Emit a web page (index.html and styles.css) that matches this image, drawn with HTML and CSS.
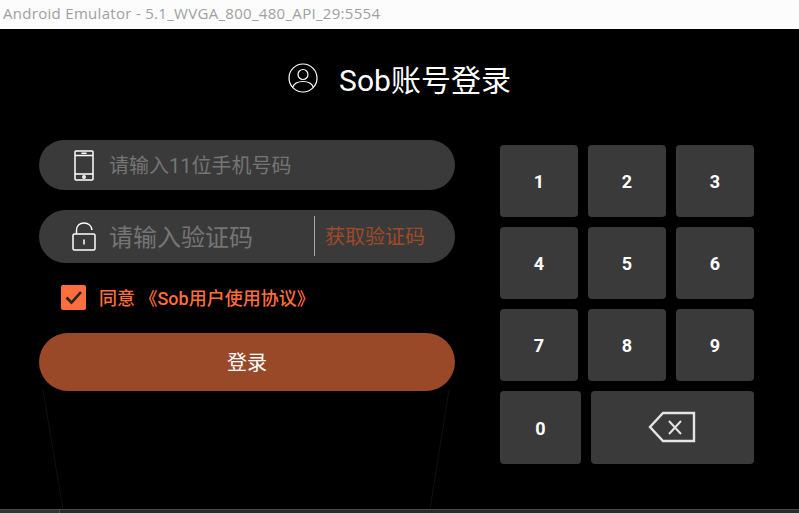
FILE: index.html
```html
<!DOCTYPE html>
<html lang="zh-CN">
  <head>
    <meta charset="UTF-8" />
    <title>Android Emulator - 5.1_WVGA_800_480_API_29:5554</title>
    <link rel="stylesheet" href="styles.css">
  </head>
  <body>
    <div class="titlebar">Android Emulator - 5.1_WVGA_800_480_API_29:5554</div>

    <div class="screen">
      <svg class="edge-lines" width="799" height="480" viewBox="0 0 799 480">
        <path d="M43 361L63 480M449 361L430 480" />
      </svg>

      <div class="heading">
        <svg class="user-icon" width="30" height="30" viewBox="0 0 30 30">
          <circle cx="15" cy="15" r="14" />
          <circle cx="15" cy="11.5" r="5" />
          <path d="M4.5 24.5C6 20.5 10 18.5 15 18.5S24 20.5 25.5 24.5" />
        </svg>
        <h1>Sob账号登录</h1>
      </div>

      <div class="content">
        <div class="form">
          <div class="field field-phone">
            <span class="field-icon">
              <svg width="20" height="31" viewBox="0 0 20 31">
                <rect x="1" y="1" width="18" height="29" rx="1" />
                <path d="M1 5.5H19M1 24H19M7.5 3.2H12.5" />
                <circle cx="10" cy="27" r="1.2" />
              </svg>
            </span>
            <span class="placeholder">请输入11位手机号码</span>
          </div>

          <div class="field field-code">
            <span class="field-icon">
              <svg width="24" height="29" viewBox="0 0 24 29">
                <rect x="1" y="12" width="22" height="16" rx="1.5" />
                <path d="M4.5 12V8.5C4.5 4 7.500 1 12 1S19.500 4 20 8" />
                <path d="M12 17.500V22.500" />
              </svg>
            </span>
            <span class="placeholder placeholder-large">请输入验证码</span>
            <span class="divider"></span>
            <span class="get-code">获取验证码</span>
          </div>

          <div class="agree">
            <span class="checkbox">
              <svg width="25" height="25" viewBox="0 0 25 25">
                <path d="M5.500 12.500L10.500 17.500L20 7" />
              </svg>
            </span>
            <span class="agree-text">同意 《Sob用户使用协议》</span>
          </div>

          <button class="login-btn">登录</button>
        </div>

        <div class="keypad">
          <div class="key">1</div>
          <div class="key">2</div>
          <div class="key">3</div>
          <div class="key">4</div>
          <div class="key">5</div>
          <div class="key">6</div>
          <div class="key">7</div>
          <div class="key">8</div>
          <div class="key">9</div>
          <div class="key-row">
            <div class="key key-zero">0</div>
            <div class="key key-back">
              <svg width="48" height="32" viewBox="0 0 48 32">
                <path class="back-outline" d="M15 2H46V30H15L2 16Z" />
                <path class="back-x" d="M21 10L33 23M33 10L21 23" />
              </svg>
            </div>
          </div>
        </div>
      </div>
    </div>

    <div class="bottom-strip"><span class="strip-left"></span></div>
  </body>
</html>
```

FILE: styles.css
```css
* {
  box-sizing: border-box;
}
html,
body {
  height: 100%;
}
body {
  margin: 0;
  display: flex;
  flex-direction: column;
  overflow: hidden;
  background-color: #000;
  font-family: Roboto, "Noto Sans CJK SC", sans-serif;
}
.titlebar {
  height: 29px;
  padding: 3px 0 0 3px;
  background-color: #fcfcfc;
  color: #a0a0a0;
  font-family: "Open Sans", sans-serif;
  font-size: 15px;
  line-height: 20px;
  letter-spacing: 0.3px;
  white-space: nowrap;
}
.screen {
  position: relative;
  height: 480px;
  background-color: #000;
}
.edge-lines {
  position: absolute;
  left: 0;
  top: 0;
}
.edge-lines path {
  fill: none;
  stroke: #101010;
  stroke-width: 1;
}
.heading {
  display: flex;
  align-items: center;
  justify-content: center;
  gap: 21px;
  height: 46px;
  margin-top: 27px;
  padding-bottom: 2px;
}
.user-icon {
  fill: none;
  stroke: #fff;
  stroke-width: 1.2;
}
h1 {
  margin: 0;
  color: #fff;
  font-size: 30px;
  font-weight: 400;
}
.content {
  position: relative;
  display: flex;
  align-items: flex-start;
  margin-top: 38px;
  padding-left: 39px;
}
.form {
  width: 416px;
}
.field {
  display: flex;
  align-items: center;
  background-color: #3a3a3a;
}
.field-phone {
  height: 50px;
  border-radius: 25px;
}
.field-code {
  height: 53px;
  margin-top: 20px;
  border-radius: 26.5px;
}
.field-icon {
  display: flex;
  justify-content: center;
  width: 71px;
  padding-left: 18px;
}
.field-icon svg {
  fill: none;
  stroke: #fff;
  stroke-width: 1.5;
}
.placeholder {
  margin: -2px 0 0 -1px;
  color: #757575;
  font-size: 20px;
}
.placeholder-large {
  width: 205px;
  font-size: 24px;
}
.divider {
  width: 1px;
  height: 40px;
  margin-top: -1px;
  background-color: #a8a8a8;
}
.get-code {
  margin: -2px 0 0 10px;
  color: #a04a28;
  font-size: 20px;
}
.agree {
  display: flex;
  align-items: center;
  height: 25px;
  margin-top: 22px;
  padding-left: 22px;
}
.checkbox {
  display: flex;
  width: 25px;
  height: 25px;
  border-radius: 2px;
  background-color: #ff6e3c;
}
.checkbox svg {
  fill: none;
  stroke: #222;
  stroke-width: 2.6;
}
.agree-text {
  margin: -2px 0 0 13px;
  color: #ff6e3c;
  font-size: 18px;
  font-weight: 500;
  white-space: pre;
}
.login-btn {
  display: block;
  width: 100%;
  height: 58px;
  margin-top: 23px;
  padding: 0 0 2px;
  border: none;
  border-radius: 29px;
  background-color: #994828;
  color: #fff;
  font-family: inherit;
  font-size: 20px;
}
.keypad {
  display: grid;
  grid-template-columns: repeat(3, 78px);
  grid-auto-rows: 72px;
  gap: 10px;
  margin: 5px 0 0 45px;
}
.key {
  display: flex;
  align-items: center;
  justify-content: center;
  padding-top: 1px;
  border-radius: 4px;
  background-color: #3a3a3a;
  color: #fff;
  font-size: 18px;
  font-weight: 700;
}
.key-row {
  grid-column: 1 / 4;
  display: flex;
  gap: 10px;
  height: 73px;
}
.key-zero {
  width: 81px;
}
.key-back {
  flex: 1;
}
.key-back svg {
  fill: none;
  margin-right: 2px;
  margin-bottom: 2px;
}
.back-outline {
  stroke: #e4e4e4;
  stroke-width: 2.4;
}
.back-x {
  stroke: #e4e4e4;
  stroke-width: 2;
}
.bottom-strip {
  flex: 1;
  border-top: 1px solid #4a4a4a;
  background-color: #2b2b2b;
}
.strip-left {
  display: block;
  width: 60px;
  height: 100%;
  border-right: 1px solid #555;
  background-color: #333;
}
```
